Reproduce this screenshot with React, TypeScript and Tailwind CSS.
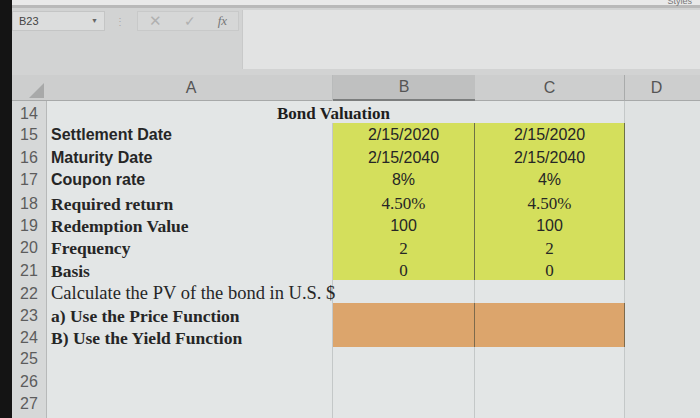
const rows = [
  { n: 14 },
  { n: 15, a: "Settlement Date", sans: true, b: "2/15/2020", c: "2/15/2020", vs: true, fill: "y" },
  { n: 16, a: "Maturity Date", sans: true, b: "2/15/2040", c: "2/15/2040", vs: true, fill: "y" },
  { n: 17, a: "Coupon rate", sans: true, b: "8%", c: "4%", vs: true, fill: "y" },
  { n: 18, a: "Required return", b: "4.50%", c: "4.50%", fill: "y" },
  { n: 19, a: "Redemption Value", b: "100", c: "100", vs: true, fill: "y" },
  { n: 20, a: "Frequency", b: "2", c: "2", fill: "y" },
  { n: 21, a: "Basis", b: "0", c: "0", fill: "y" },
  { n: 22, a: "Calculate the PV of the bond in U.S. $", plain: true },
  { n: 23, a: "a) Use the Price Function", fill: "o" },
  { n: 24, a: "B) Use the Yield Function", fill: "o" },
  { n: 25 },
  { n: 26 },
  { n: 27 },
  { n: 28 },
];

const cols = "grid grid-cols-[35px_286px_142px_150px_1fr]";

export default function App() {
  return (
    <div className="w-[700px] h-[418px] overflow-hidden bg-[#141414] flex">
      <div className="w-[12px] shrink-0" />
      <div className="flex-1 flex flex-col bg-[#d9dbdb] font-['Liberation_Sans',sans-serif]">
        {/* ribbon edge */}
        <div className="h-[5px] shrink-0 bg-[#e9e9e9] relative">
          <span className="absolute right-[8px] -top-[4px] text-[9px] leading-[10px] text-[#777]">Styles</span>
        </div>
        <div className="h-[3px] shrink-0 bg-[#b9b9b9]" />

        {/* formula bar */}
        <div className="flex h-[67px] shrink-0 bg-[#d2d3d3]">
          <div className="flex flex-col">
            <div className="flex items-center h-[22px] mt-[2px]">
              <div className="w-[93px] h-[20px] bg-[#dcdddd] border border-[#c4c5c5] flex items-center justify-between px-[6px]">
                <span className="text-[11px] text-[#444]">B23</span>
                <span className="text-[7px] text-[#666]">▼</span>
              </div>
              <span className="ml-[10px] text-[10px] text-[#aaa]">⋮</span>
              <div className="ml-[12px] w-[102px] h-[20px] border border-[#c8c9c9] bg-[#d6d7d7] flex items-center justify-around">
                <span className="text-[15px] text-[#b0b0b0]">✕</span>
                <span className="text-[14px] text-[#b0b0b0]">✓</span>
                <span className="text-[13px] italic text-[#777] font-['Liberation_Serif',serif]">fx</span>
              </div>
            </div>
          </div>
          <div className="flex-1 ml-[3px] mt-[2px] mb-[6px] bg-[#e2e3e3] border-l border-[#c8c9c9]" />
        </div>

        {/* column headers */}
        <div className={`${cols} h-[26px] shrink-0 bg-[#cdcece] border-b border-[#a7a9a9] text-[16px] text-[#555]`}>
          <div className="flex items-end justify-end pb-[3px] pr-[3px]">
            <div className="w-0 h-0 border-l-[15px] border-l-transparent border-b-[15px] border-b-[#a8a9a9]" />
          </div>
          <div className="flex items-center justify-center border-r border-[#b9bbbb] pl-[3px]">A</div>
          <div className="flex items-center justify-center bg-[#bfc0c0] border-b-2 border-[#7c7e7e]">B</div>
          <div className="flex items-center justify-center border-r border-[#a9abab]">C</div>
          <div className="flex items-center justify-center pr-[12px]">D</div>
        </div>

        {/* rows */}
        <div className="flex-1 flex flex-col">
          {rows.map((r) => {
            const fillCls =
              r.fill === "y"
                ? "bg-[#d4df5c] border-r border-b border-[#6e7146]"
                : r.fill === "o"
                ? "bg-[#dca56c] border-r border-b border-[#7d6a4c]"
                : "border-r border-b border-[#c4c8c8]";
            const valFont = r.vs ? "font-['Liberation_Sans',sans-serif]" : "font-['Liberation_Serif',serif] text-[17px]";
            return (
              <div key={r.n} className={`${cols} h-[22.4px] shrink-0 text-[#262626]`}>
                <div className="bg-[#d6d8d8] border-b border-r border-[#b7b9b9] flex items-center pl-[8px] text-[16px] text-[#5c5c5c]">
                  {r.n}
                </div>
                {r.n === 14 ? (
                  <div className="col-span-2 bg-[#e3e6e6] border-b border-[#c4c8c8] flex items-center pl-[230px] font-['Liberation_Serif',serif] font-bold text-[17px] text-[#1e1e1e]">
                    Bond Valuation
                  </div>
                ) : (
                  <>
                    <div
                      className={`bg-[#e3e6e6] border-r border-b border-[#c4c8c8] flex items-center pl-[4px] whitespace-nowrap overflow-visible relative z-10 text-[16px] ${
                        r.sans
                          ? "font-bold font-['Liberation_Sans',sans-serif]"
                          : r.plain
                          ? "font-['Liberation_Serif',serif] text-[18.5px]"
                          : "font-bold font-['Liberation_Serif',serif] text-[17.5px]"
                      }`}
                    >
                      {r.a}
                    </div>
                    <div className={`flex items-center justify-center text-[16px] ${r.fill ? fillCls : "bg-[#e3e6e6] border-r border-b border-[#c4c8c8]"} ${valFont}`}>
                      {r.b}
                    </div>
                  </>
                )}
                <div className={`flex items-center justify-center text-[16px] ${r.fill ? fillCls : "bg-[#e3e6e6] border-r border-b border-[#c4c8c8]"} ${valFont}`}>
                  {r.c}
                </div>
                <div className="bg-[#dfe2e2] border-b border-[#c4c8c8]" />
              </div>
            );
          })}
        </div>
      </div>
    </div>
  );
}
